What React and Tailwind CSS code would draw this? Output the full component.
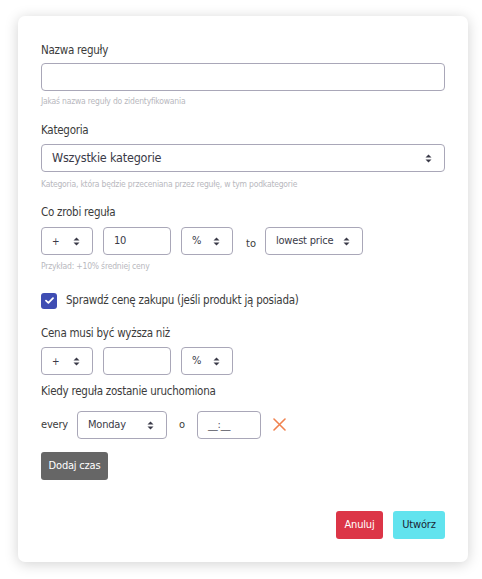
const font = { fontFamily: '"DejaVu Sans Condensed", "Liberation Sans", sans-serif' };

function Arrows() {
  return (
    <svg width="7" height="9" viewBox="0 0 7 9" className="shrink-0">
      <path d="M3.5 0.5 L6.5 3.5 H0.5 Z" fill="#3a3a48" />
      <path d="M3.5 8.5 L6.5 5.5 H0.5 Z" fill="#3a3a48" />
    </svg>
  );
}

function Select({ value, className, textClass = "text-[11px] tracking-[-0.2px]" }) {
  return (
    <div
      className={`h-[28px] flex items-center justify-between pl-[10px] pr-[12px] border border-[#a9a7b8] rounded-[4px] bg-white text-[#3a3a48] ${className}`}
    >
      <span className={`whitespace-nowrap ${textClass}`}>{value}</span>
      <Arrows />
    </div>
  );
}

function Field({ value, className }) {
  return (
    <div
      className={`h-[28px] flex items-center px-[10px] border border-[#a9a7b8] rounded-[4px] bg-white text-[11px] tracking-[-0.2px] text-[#3a3a48] ${className}`}
    >
      {value}
    </div>
  );
}

function Label({ children, className = "" }) {
  return <div className={`text-[11.5px] tracking-[-0.25px] leading-[16px] text-[#3b3b3b] ${className}`}>{children}</div>;
}

function Help({ children, className = "" }) {
  return <div className={`text-[8.5px] tracking-[-0.2px] leading-[12px] text-[#b8b8be] ${className}`}>{children}</div>;
}

export default function App() {
  return (
    <div className="min-h-screen bg-white pt-[16px] pl-[18px]" style={font}>
      <div className="w-[450px] bg-white rounded-[7px] shadow-[0_2px_14px_rgba(0,0,0,0.18)] px-[23px] pt-[26px] pb-[23px]">
        <Label>Nazwa reguły</Label>
        <Field value="" className="mt-[5px] w-full" />
        <Help className="mt-[4px]">Jakaś nazwa reguły do zidentyfikowania</Help>

        <Label className="mt-[15px]">Kategoria</Label>
        <Select value="Wszystkie kategorie" className="mt-[6px] w-full" textClass="text-[12.5px] tracking-[-0.2px]" />
        <Help className="mt-[6px]">Kategoria, która będzie przeceniana przez regułę, w tym podkategorie</Help>

        <Label className="mt-[14px]">Co zrobi reguła</Label>
        <div className="mt-[7px] flex items-center">
          <Select value="+" className="w-[52px]" textClass="text-[10px]" />
          <Field value="10" className="w-[68px] ml-[10px]" />
          <Select value="%" className="w-[52px] ml-[10px]" />
          <span className="ml-[13px] mr-[9px] mt-[7px] text-[11px] text-[#3b3b3b]">to</span>
          <Select value="lowest price" className="w-[98px]" />
        </div>
        <Help className="mt-[5px]">Przykład: +10% średniej ceny</Help>

        <div className="mt-[20px] flex items-center">
          <div className="w-[16px] h-[16px] rounded-[3px] bg-[#3f4db3] flex items-center justify-center">
            <svg width="9" height="7" viewBox="0 0 9 7">
              <path d="M1 3.6 L3.4 5.8 L8 1.2" fill="none" stroke="white" strokeWidth="1.8" strokeLinecap="round" strokeLinejoin="round" />
            </svg>
          </div>
          <span className="ml-[9px] text-[11.5px] tracking-[-0.25px] text-[#3b3b3b]">Sprawdź cenę zakupu (jeśli produkt ją posiada)</span>
        </div>

        <Label className="mt-[16px]">Cena musi być wyższa niż</Label>
        <div className="mt-[6px] flex items-center">
          <Select value="+" className="w-[52px]" textClass="text-[10px]" />
          <Field value="" className="w-[68px] ml-[10px]" />
          <Select value="%" className="w-[52px] ml-[10px]" />
        </div>

        <Label className="mt-[8px]">Kiedy reguła zostanie uruchomiona</Label>
        <div className="mt-[12px] flex items-center">
          <span className="text-[11px] tracking-[-0.2px] text-[#3b3b3b] w-[36px]">every</span>
          <Select value="Monday" className="w-[90px]" />
          <span className="ml-[12px] text-[11px] text-[#3b3b3b] w-[18px]">o</span>
          <Field value="__:__" className="w-[64px] text-[#55555f]" />
          <svg width="13" height="13" viewBox="0 0 13 13" className="ml-[12px] -mt-[2px]">
            <path d="M1 1 L12 12 M12 1 L1 12" stroke="#f0824f" strokeWidth="1.6" strokeLinecap="round" />
          </svg>
        </div>

        <button className="mt-[13px] h-[28px] w-[67px] rounded-[3px] bg-[#666666] text-white text-[11px] font-medium tracking-[-0.2px] whitespace-nowrap">Dodaj czas</button>

        <div className="mt-[31px] flex justify-end gap-[10px]">
          <button className="h-[28px] w-[47px] rounded-[3px] bg-[#dc3547] text-white text-[11px] font-medium tracking-[-0.2px]">Anuluj</button>
          <button className="h-[28px] w-[52px] rounded-[3px] bg-[#61e3ee] text-[#1c2333] text-[11px] font-medium tracking-[-0.2px]">Utwórz</button>
        </div>
      </div>
    </div>
  );
}
